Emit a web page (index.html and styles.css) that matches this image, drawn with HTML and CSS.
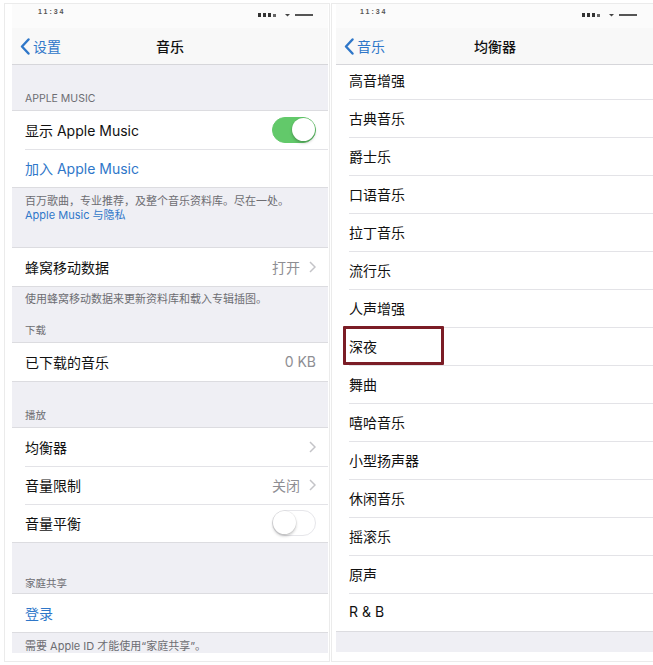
FILE: index.html
```html
<!DOCTYPE html>
<html lang="zh-CN">
<head>
<meta charset="utf-8">
<title>音乐 / 均衡器</title>
<link rel="stylesheet" href="styles.css">
</head>
<body>
<div class="page">
  <section class="frame frame-left">
    <div class="screen">
      <div class="status">
        <span class="time">11:34</span>
        <svg class="sicons" width="56" height="6" viewBox="0 0 56 6"><rect x="0" y="2" width="3" height="4" fill="#333"/><rect x="5" y="2" width="3" height="4" fill="#333"/><rect x="10" y="2" width="3" height="4" fill="#333"/><rect x="15" y="3" width="3" height="3" fill="#666"/><path d="M27 3 l2.5 2.5 l2.5 -2.5 z" fill="#444"/><rect x="37" y="3" width="18" height="2" fill="#555"/></svg>
      </div>
      <div class="nav">
        <a class="back"><svg width="10" height="17" viewBox="0 0 10 17"><path d="M8.5 1.5 L2 8.5 L8.5 15.5" fill="none" stroke="#2f77c9" stroke-width="2.4" stroke-linecap="round" stroke-linejoin="round"/></svg><span>设置</span></a>
        <div class="title">音乐</div>
        <div></div>
      </div>

      <div class="gray g-apple"><span class="hdr">APPLE MUSIC</span></div>
      <div class="group">
        <div class="cell"><span>显示 Apple Music</span><span class="toggle on"><span class="knob"></span></span></div>
        <div class="cell"><span class="link">加入 Apple Music</span></div>
      </div>
      <div class="gray g-foot1">
        <p class="foot">百万歌曲，专业推荐，及整个音乐资料库。尽在一处。</p>
        <p class="foot link">Apple Music 与隐私</p>
      </div>
      <div class="group">
        <div class="cell"><span>蜂窝移动数据</span><span class="val">打开<svg class="chev" width="7" height="12" viewBox="0 0 7 12"><path d="M1 1 L6 6 L1 11" fill="none" stroke="#c4c4c8" stroke-width="1.5"/></svg></span></div>
      </div>
      <div class="gray g-foot2">
        <p class="foot">使用蜂窝移动数据来更新资料库和载入专辑插图。</p>
        <p class="hdr">下载</p>
      </div>
      <div class="group">
        <div class="cell"><span>已下载的音乐</span><span class="val">0 KB</span></div>
      </div>
      <div class="gray g-play"><span class="hdr">播放</span></div>
      <div class="group">
        <div class="cell"><span>均衡器</span><span class="val"><svg class="chev" width="7" height="12" viewBox="0 0 7 12"><path d="M1 1 L6 6 L1 11" fill="none" stroke="#c4c4c8" stroke-width="1.5"/></svg></span></div>
        <div class="cell"><span>音量限制</span><span class="val">关闭<svg class="chev" width="7" height="12" viewBox="0 0 7 12"><path d="M1 1 L6 6 L1 11" fill="none" stroke="#c4c4c8" stroke-width="1.5"/></svg></span></div>
        <div class="cell"><span>音量平衡</span><span class="toggle"><span class="knob"></span></span></div>
      </div>
      <div class="gray g-family"><span class="hdr">家庭共享</span></div>
      <div class="group">
        <div class="cell"><span class="link">登录</span></div>
      </div>
      <div class="gray g-foot3">
        <p class="foot">需要 Apple ID 才能使用“家庭共享”。</p>
      </div>
    </div>
  </section>

  <section class="frame frame-right">
    <div class="screen">
      <div class="status">
        <span class="time">11:34</span>
        <svg class="sicons" width="56" height="6" viewBox="0 0 56 6"><rect x="0" y="2" width="3" height="4" fill="#333"/><rect x="5" y="2" width="3" height="4" fill="#333"/><rect x="10" y="2" width="3" height="4" fill="#333"/><rect x="15" y="3" width="3" height="3" fill="#666"/><path d="M27 3 l2.5 2.5 l2.5 -2.5 z" fill="#444"/><rect x="37" y="3" width="18" height="2" fill="#555"/></svg>
      </div>
      <div class="nav">
        <a class="back"><svg width="10" height="17" viewBox="0 0 10 17"><path d="M8.5 1.5 L2 8.5 L8.5 15.5" fill="none" stroke="#2f77c9" stroke-width="2.4" stroke-linecap="round" stroke-linejoin="round"/></svg><span>音乐</span></a>
        <div class="title">均衡器</div>
        <div></div>
      </div>
      <div class="group list">
        <div class="cell first"><span>高音增强</span></div>
        <div class="cell"><span>古典音乐</span></div>
        <div class="cell"><span>爵士乐</span></div>
        <div class="cell"><span>口语音乐</span></div>
        <div class="cell"><span>拉丁音乐</span></div>
        <div class="cell"><span>流行乐</span></div>
        <div class="cell"><span>人声增强</span></div>
        <div class="cell marked"><span>深夜</span><span class="mark"></span></div>
        <div class="cell"><span>舞曲</span></div>
        <div class="cell"><span>嘻哈音乐</span></div>
        <div class="cell"><span>小型扬声器</span></div>
        <div class="cell"><span>休闲音乐</span></div>
        <div class="cell"><span>摇滚乐</span></div>
        <div class="cell"><span>原声</span></div>
        <div class="cell"><span>R &amp; B</span></div>
      </div>
      <div class="gray g-end"></div>
    </div>
  </section>
</div>
</body>
</html>
```

FILE: styles.css
```css
html, body {
  margin: 0;
  padding: 0;
  background: #ffffff;
  overflow: hidden;
}

body {
  font-family: Inter, "Noto Sans CJK SC", sans-serif;
  color: #111111;
  width: 653px;
  height: 665px;
}

.page {
  display: flex;
  align-items: flex-start;
  padding-top: 3px;
  width: 653px;
  height: 665px;
  box-sizing: border-box;
}

.frame {
  border: 1px solid #ebebeb;
  background: #ffffff;
  box-sizing: border-box;
  height: 659px;
  flex: none;
}

.frame-left {
  margin-left: 4px;
  padding-left: 7px;
  padding-right: 1px;
  width: 326px;
}

.frame-right {
  margin-left: 1px;
  padding-left: 4px;
  width: 340px;
  border-right: none;
}

.screen {
  width: 316px;
  display: flex;
  flex-direction: column;
}

.frame-right .screen {
  width: 318px;
}

/* status bar: small remnants of the clock and icons */
.status {
  height: 24px;
  background: #fbfbfb;
  box-sizing: border-box;
  padding: 4px 14px 0 26px;
  display: flex;
  justify-content: space-between;
  align-items: flex-start;
}

.time {
  font-family: "Liberation Sans", sans-serif;
  font-size: 7px;
  line-height: 8px;
  font-weight: 700;
  letter-spacing: 2px;
  color: #555;
}

.sicons {
  margin-top: 3px;
}

.frame-right .status {
  padding-left: 24px;
  padding-right: 16px;
}

/* navigation bar */
.nav {
  height: 36px;
  background: #f8f8f8;
  border-bottom: 1px solid #d6d6da;
  display: grid;
  grid-template-columns: 1fr auto 1fr;
  align-items: center;
  padding: 0 8px;
}

.back {
  display: flex;
  align-items: center;
  gap: 3px;
  color: #2f77c9;
  font-size: 14px;
}

.back svg {
  flex: none;
}

.title {
  font-size: 14px;
  font-weight: 500;
  color: #111;
}

/* grouped table */
.gray {
  background: #efeff4;
  padding: 0 13px;
  box-sizing: border-box;
  display: flex;
  flex-direction: column;
}

.hdr {
  margin: 0;
  font-size: 10.5px;
  line-height: 14px;
  color: #6d6d72;
}

.foot {
  margin: 0;
  font-size: 11px;
  line-height: 14px;
  color: #6d6d72;
}

.foot.link {
  color: #2f77c9;
}

.g-apple {
  height: 46px;
  justify-content: flex-end;
  padding-bottom: 4px;
  border-bottom: 1px solid #dcdce0;
}

.g-foot1 {
  height: 61px;
  padding-top: 6px;
  border-top: 1px solid #dcdce0;
  border-bottom: 1px solid #dcdce0;
}

.g-foot2 {
  height: 57px;
  padding-top: 5px;
  justify-content: space-between;
  padding-bottom: 4px;
  border-top: 1px solid #dcdce0;
  border-bottom: 1px solid #dcdce0;
}

.g-play {
  height: 47px;
  justify-content: flex-end;
  padding-bottom: 4px;
  border-top: 1px solid #dcdce0;
  border-bottom: 1px solid #dcdce0;
}

.g-family {
  height: 52px;
  justify-content: flex-end;
  padding-bottom: 2px;
  border-top: 1px solid #dcdce0;
  border-bottom: 1px solid #dcdce0;
}

.g-foot3 {
  height: 21px;
  padding-top: 6px;
  border-top: 1px solid #dcdce0;
}

.g-end {
  height: 21px;
  border-top: 1px solid #dcdce0;
}

.group {
  background: #ffffff;
  display: flex;
  flex-direction: column;
}

.cell {
  position: relative;
  height: 38px;
  box-sizing: border-box;
  padding: 0 12px 1px 13px;
  display: flex;
  align-items: center;
  justify-content: space-between;
  font-size: 14px;
  color: #111;
}

.cell + .cell::before {
  content: "";
  position: absolute;
  left: 13px;
  right: 0;
  top: 0;
  height: 1px;
  background: #e3e3e7;
}

.link {
  color: #2f77c9;
}

.val {
  display: flex;
  align-items: center;
  color: #8e8e93;
  font-size: 14px;
}

.chev {
  margin-left: 9px;
}

/* switches */
.toggle {
  position: relative;
  width: 44px;
  height: 26px;
  border-radius: 13px;
  box-sizing: border-box;
  background: #ffffff;
  border: 1.5px solid #e6e6ea;
  flex: none;
}

.toggle .knob {
  position: absolute;
  top: 0;
  left: 0;
  width: 23px;
  height: 23px;
  border-radius: 50%;
  background: #ffffff;
  box-shadow: 0 2px 3px rgba(0, 0, 0, 0.22), 0 0 0 0.5px rgba(0, 0, 0, 0.08);
}

.toggle.on {
  background: #62c96a;
  border-color: #62c96a;
}

.toggle.on .knob {
  left: auto;
  right: 0;
}

/* equalizer list */
.list .cell.first {
  height: 34px;
  padding-bottom: 5px;
}

.mark {
  position: absolute;
  left: 7px;
  top: -1px;
  width: 101px;
  height: 39px;
  box-sizing: border-box;
  border: 3px solid #7b1d26;
  border-radius: 1px;
}
```
